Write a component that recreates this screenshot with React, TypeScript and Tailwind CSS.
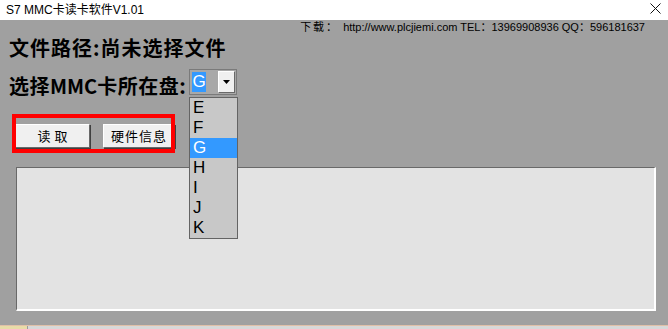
import React from 'react';

const drives = ['E', 'F', 'G', 'H', 'I', 'J', 'K'];

const App: React.FC = () => {
  return (
    <div className="w-[668px] h-[329px] overflow-hidden bg-white font-['Liberation_Sans','Noto_Sans_CJK_SC',sans-serif]">
      {/* Title bar */}
      <div className="h-[20px] flex items-center justify-between bg-white pl-[6px] pr-[7px]">
        <span className="text-[12px] leading-none text-black">S7 MMC卡读卡软件V1.01</span>
        <svg width="11" height="11" viewBox="0 0 11 11" className="mt-[-4px]">
          <path d="M0.5 0.5 L10.5 10.5 M10.5 0.5 L0.5 10.5" stroke="#111" strokeWidth="1" />
        </svg>
      </div>

      {/* Window body */}
      <div className="relative h-[305px] bg-[#a0a0a0]">
        <div className="h-[14px] flex justify-end pr-[23px] text-[11px] leading-[14px] text-black">
          <span className="mr-[4px] tracking-[2px]">下载：</span>
          <span>http://www.plcjiemi.com TEL：13969908936 QQ：596181637</span>
        </div>

        <div className="mt-[2px] pl-[9px] h-[24px] text-[20px] leading-[24px] font-bold text-black tracking-[1px] font-['Noto_Sans_CJK_SC',sans-serif]">
          文件路径:尚未选择文件
        </div>

        <div className="mt-[9px] pl-[9px] flex items-start">
          <span className="w-[180px] shrink-0 whitespace-nowrap mt-[5px] h-[24px] text-[20px] leading-[24px] font-bold text-black tracking-[0.5px] font-['Noto_Sans_CJK_SC',sans-serif]">
            选择<span className="tracking-[0px]">MMC</span>卡所在盘:
          </span>
          {/* Combo box */}
          <div className="shrink-0 w-[48px] h-[26px] border border-[#7a7a7a] bg-[#a8a8a8] flex items-center pl-[2px] pr-[1px]">
            <div className="w-[14px] h-[20px] bg-[#3399ff] text-white text-[17px] leading-[20px] flex items-center justify-center">G</div>
            <div className="ml-auto w-[17px] h-[22px] bg-[#f0f0f0] border-r border-b border-[#696969] border-t border-l border-t-white border-l-white flex items-center justify-center">
              <svg width="7" height="4" viewBox="0 0 7 4">
                <path d="M0 0 L7 0 L3.5 4 Z" fill="#000" />
              </svg>
            </div>
          </div>
        </div>

        {/* Buttons with red annotation box */}
        <div className="relative mt-[26px] ml-[15px] flex gap-[13px] w-fit">
          <button className="w-[75px] h-[24px] bg-[#f0f0f0] border border-t-white border-l-white border-r-[#696969] border-b-[#696969] shadow-[1px_1px_0_#404040] text-[13px] text-black tracking-[4px] pl-[4px] font-['Noto_Sans_CJK_SC',sans-serif]">
            读取
          </button>
          <button className="w-[72px] h-[24px] bg-[#f0f0f0] border border-t-white border-l-white border-r-[#696969] border-b-[#696969] shadow-[1px_1px_0_#404040] text-[13px] text-black tracking-[1px] font-['Noto_Sans_CJK_SC',sans-serif]">
            硬件信息
          </button>
          <div className="absolute left-[-3px] top-[-10px] w-[163px] h-[39px] border-4 border-[#ff0000] pointer-events-none" />
        </div>

        {/* Output area */}
        <div className="mt-[19px] ml-[16px] w-[640px] h-[144px] bg-[#e3e3e3] border-t border-l border-[#696969] border-r-2 border-b-2 border-r-white border-b-white" />

        {/* Open drop-down list */}
        <div className="absolute left-[189px] top-[77px] w-[49px] border border-[#646464] bg-[#c8c8c8]">
          {drives.map((d) => (
            <div
              key={d}
              className={`h-[20px] pl-[3px] text-[17px] leading-[20px] ${d === 'G' ? 'bg-[#3399ff] text-white' : 'text-black'}`}
            >
              {d}
            </div>
          ))}
        </div>
      </div>

      {/* Bottom strip */}
      <div className="h-[4px] border-t border-[#e0c0a8] flex">
        <div className="w-[27px] bg-[#e8dca8]" />
        <div className="w-[1px] bg-[#9a9a9a]" />
        <div className="flex-1 bg-[#d8d8d8]" />
      </div>
    </div>
  );
};

export default App;
